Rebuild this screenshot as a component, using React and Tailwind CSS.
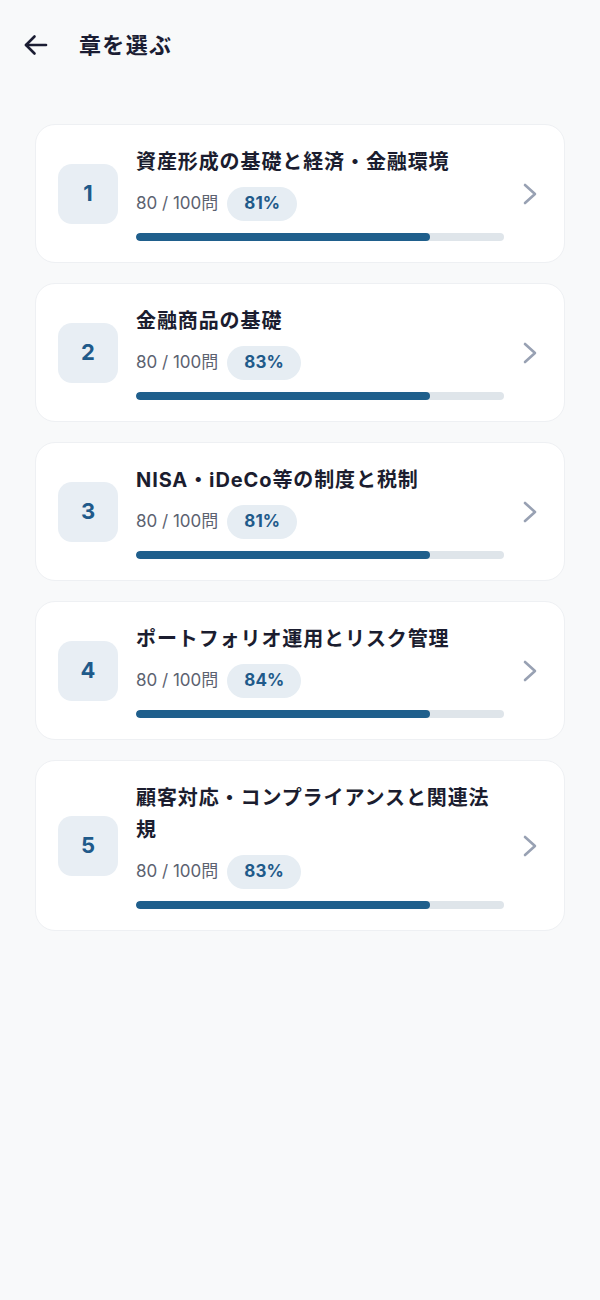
import React from 'react';

const chapters = [
  { no: 1, title: '資産形成の基礎と経済・金融環境', done: 80, total: 100, rate: 81 },
  { no: 2, title: '金融商品の基礎', done: 80, total: 100, rate: 83 },
  { no: 3, title: 'NISA・iDeCo等の制度と税制', done: 80, total: 100, rate: 81 },
  { no: 4, title: 'ポートフォリオ運用とリスク管理', done: 80, total: 100, rate: 84 },
  { no: 5, title: '顧客対応・コンプライアンスと関連法規', done: 80, total: 100, rate: 83 },
];

const BackArrow = () => (
  <svg width="26" height="22" viewBox="0 0 26 22" fill="none" stroke="#1b1d33" strokeWidth="2.6" strokeLinecap="round" strokeLinejoin="round">
    <path d="M23 11H3" />
    <path d="M11.5 2.5L3 11l8.5 8.5" />
  </svg>
);

const Chevron = () => (
  <svg width="16" height="22" viewBox="0 0 16 22" fill="none" stroke="#98a1b3" strokeWidth="2.6" strokeLinecap="round" strokeLinejoin="round">
    <path d="M3 2l10 9-10 9" />
  </svg>
);

const ChapterCard = ({ chapter }) => {
  const pct = (chapter.done / chapter.total) * 100;
  return (
    <div className="flex items-center bg-white rounded-[20px] border border-[#eef0f3] pl-[22px] pr-[26px] py-[21px]">
      <div className="w-[60px] h-[60px] shrink-0 rounded-[14px] bg-[#e8eef4] flex items-center justify-center text-[22px] font-bold text-[#1f5a8a]">
        {chapter.no}
      </div>
      <div className="flex-1 ml-[18px] mr-[18px] min-w-0">
        <div className="text-[20px] leading-[32px] font-bold text-[#1b1d2f] tracking-[0.045em]">
          {chapter.title}
        </div>
        <div className="flex items-center mt-[9px]">
          <span className="text-[17px] text-[#5c6270]">{chapter.done} / {chapter.total}問</span>
          <span className="ml-[9px] h-[34px] px-[17px] rounded-full bg-[#e6edf3] flex items-center text-[17px] font-bold text-[#1f5a8a]">
            {chapter.rate}%
          </span>
        </div>
        <div className="mt-[12px] h-[8px] rounded-full bg-[#dfe5ea] overflow-hidden">
          <div className="h-full rounded-full bg-[#1f5f8c]" style={{ width: `${pct}%` }} />
        </div>
      </div>
      <Chevron />
    </div>
  );
};

const App = () => {
  return (
    <div className="min-h-[1300px] bg-[#f8f9fa]" style={{ fontFamily: '"Inter", "Noto Sans CJK JP", sans-serif' }}>
      <header className="flex items-center h-[90px] pl-[23px]">
        <BackArrow />
        <h1 className="ml-[30px] text-[22px] font-bold text-[#1b1d33] tracking-[0.06em]">章を選ぶ</h1>
      </header>
      <div className="flex flex-col gap-[20px] px-[35px] pt-[34px]">
        {chapters.map(ch => (
          <ChapterCard key={ch.no} chapter={ch} />
        ))}
      </div>
    </div>
  );
};

export default App;
